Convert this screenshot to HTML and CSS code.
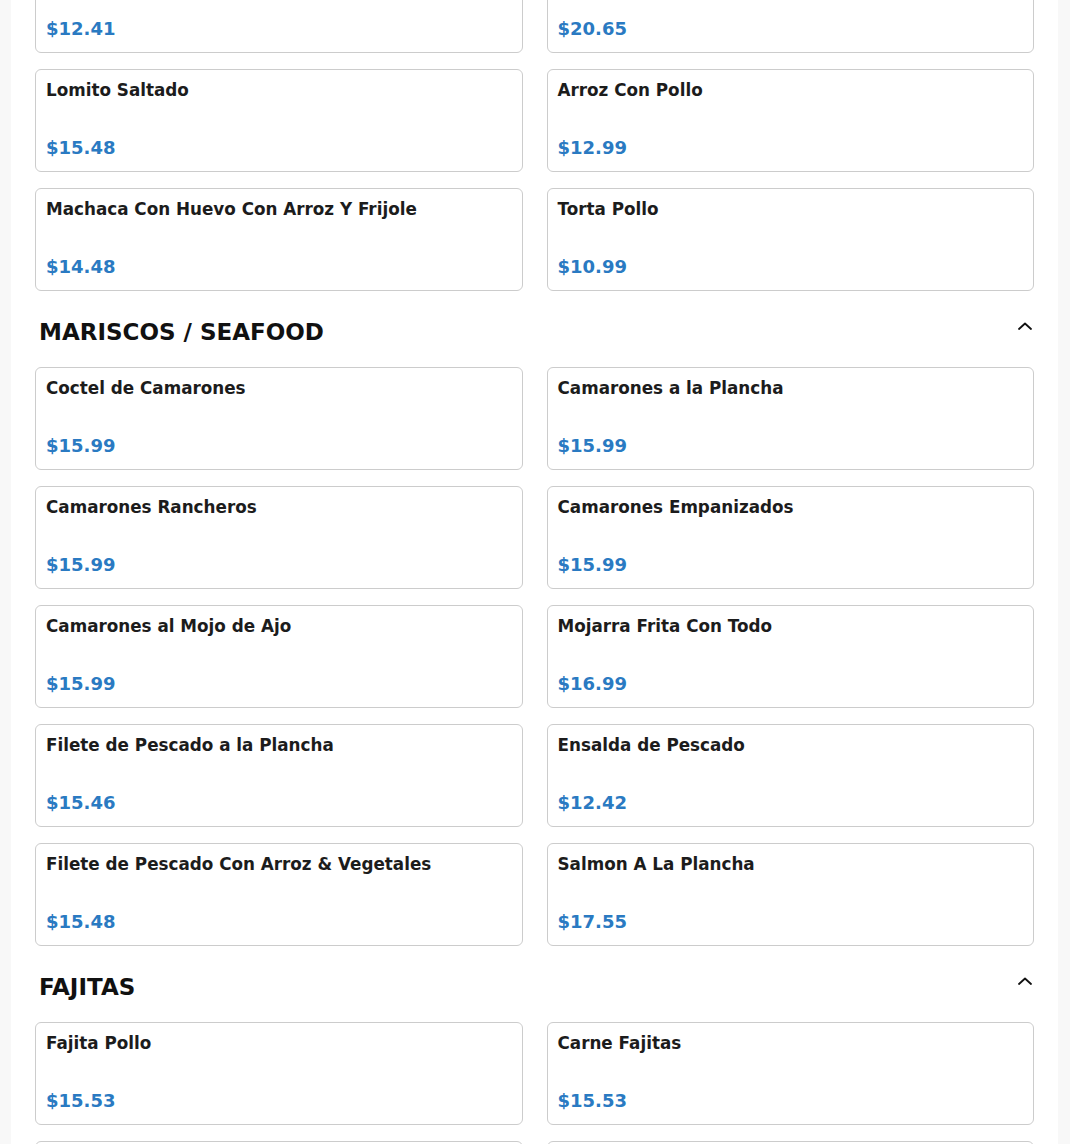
FILE: index.html
```html
<!DOCTYPE html>
<html lang="es">
<head>
<meta charset="utf-8">
<title>Menu</title>
<link rel="stylesheet" href="styles.css">
</head>
<body>
<main class="page">
  <section class="section section-first">
    <div class="grid">
      <div class="card"><div class="name">Bistec Encebollado</div><div class="price">$12.41</div></div>
      <div class="card"><div class="name">Parrillada Mixta</div><div class="price">$20.65</div></div>
      <div class="card"><div class="name">Lomito Saltado</div><div class="price">$15.48</div></div>
      <div class="card"><div class="name">Arroz Con Pollo</div><div class="price">$12.99</div></div>
      <div class="card"><div class="name">Machaca Con Huevo Con Arroz Y Frijole</div><div class="price">$14.48</div></div>
      <div class="card"><div class="name">Torta Pollo</div><div class="price">$10.99</div></div>
    </div>
  </section>

  <section class="section">
    <div class="section-head">
      <h2 class="section-title">MARISCOS / SEAFOOD</h2>
      <svg class="chevron" width="14" height="8" viewBox="0 0 14 8"><path d="M1 7 L7 1.5 L13 7" fill="none" stroke="#111" stroke-width="1.8" stroke-linecap="round" stroke-linejoin="round"/></svg>
    </div>
    <div class="grid">
      <div class="card"><div class="name">Coctel de Camarones</div><div class="price">$15.99</div></div>
      <div class="card"><div class="name">Camarones a la Plancha</div><div class="price">$15.99</div></div>
      <div class="card"><div class="name">Camarones Rancheros</div><div class="price">$15.99</div></div>
      <div class="card"><div class="name">Camarones Empanizados</div><div class="price">$15.99</div></div>
      <div class="card"><div class="name">Camarones al Mojo de Ajo</div><div class="price">$15.99</div></div>
      <div class="card"><div class="name">Mojarra Frita Con Todo</div><div class="price">$16.99</div></div>
      <div class="card"><div class="name">Filete de Pescado a la Plancha</div><div class="price">$15.46</div></div>
      <div class="card"><div class="name">Ensalda de Pescado</div><div class="price">$12.42</div></div>
      <div class="card"><div class="name">Filete de Pescado Con Arroz &amp; Vegetales</div><div class="price">$15.48</div></div>
      <div class="card"><div class="name">Salmon A La Plancha</div><div class="price">$17.55</div></div>
    </div>
  </section>

  <section class="section">
    <div class="section-head">
      <h2 class="section-title">FAJITAS</h2>
      <svg class="chevron" width="14" height="8" viewBox="0 0 14 8"><path d="M1 7 L7 1.5 L13 7" fill="none" stroke="#111" stroke-width="1.8" stroke-linecap="round" stroke-linejoin="round"/></svg>
    </div>
    <div class="grid">
      <div class="card"><div class="name">Fajita Pollo</div><div class="price">$15.53</div></div>
      <div class="card"><div class="name">Carne Fajitas</div><div class="price">$15.53</div></div>
      <div class="card"><div class="name">Fajitas Mixtas</div><div class="price">$17.53</div></div>
      <div class="card"><div class="name">Fajitas de Camaron</div><div class="price">$18.53</div></div>
    </div>
  </section>
</main>
</body>
</html>
```

FILE: styles.css
```css
html, body {
  margin: 0;
  padding: 0;
  background: #f8f8f8;
  font-family: "DejaVu Sans", "Liberation Sans", sans-serif;
  color: #1c1c1c;
}

.page {
  background: #ffffff;
  margin: -50px 12px 0 11px;
  padding: 0 24px 40px;
}

.section-head {
  display: flex;
  justify-content: space-between;
  align-items: flex-start;
  padding: 27px 2px 21px 4px;
}

.section-title {
  margin: 0;
  font-size: 23px;
  line-height: 28px;
  font-weight: bold;
  color: #111111;
}

.chevron {
  margin-top: 4px;
  display: block;
}

.grid {
  display: grid;
  grid-template-columns: 1fr 1fr;
  column-gap: 24px;
  row-gap: 16px;
}

.card {
  border: 1px solid #cccccc;
  border-radius: 6px;
  background: #fff;
  padding: 10px 10px 12px;
  height: 103px;
  box-sizing: border-box;
  display: flex;
  flex-direction: column;
  justify-content: space-between;
}

.name {
  font-size: 16.8px;
  line-height: 20px;
  font-weight: bold;
  color: #1c1c1c;
}

.price {
  font-size: 18px;
  line-height: 22px;
  font-weight: bold;
  color: #2a7ac2;
}
```
